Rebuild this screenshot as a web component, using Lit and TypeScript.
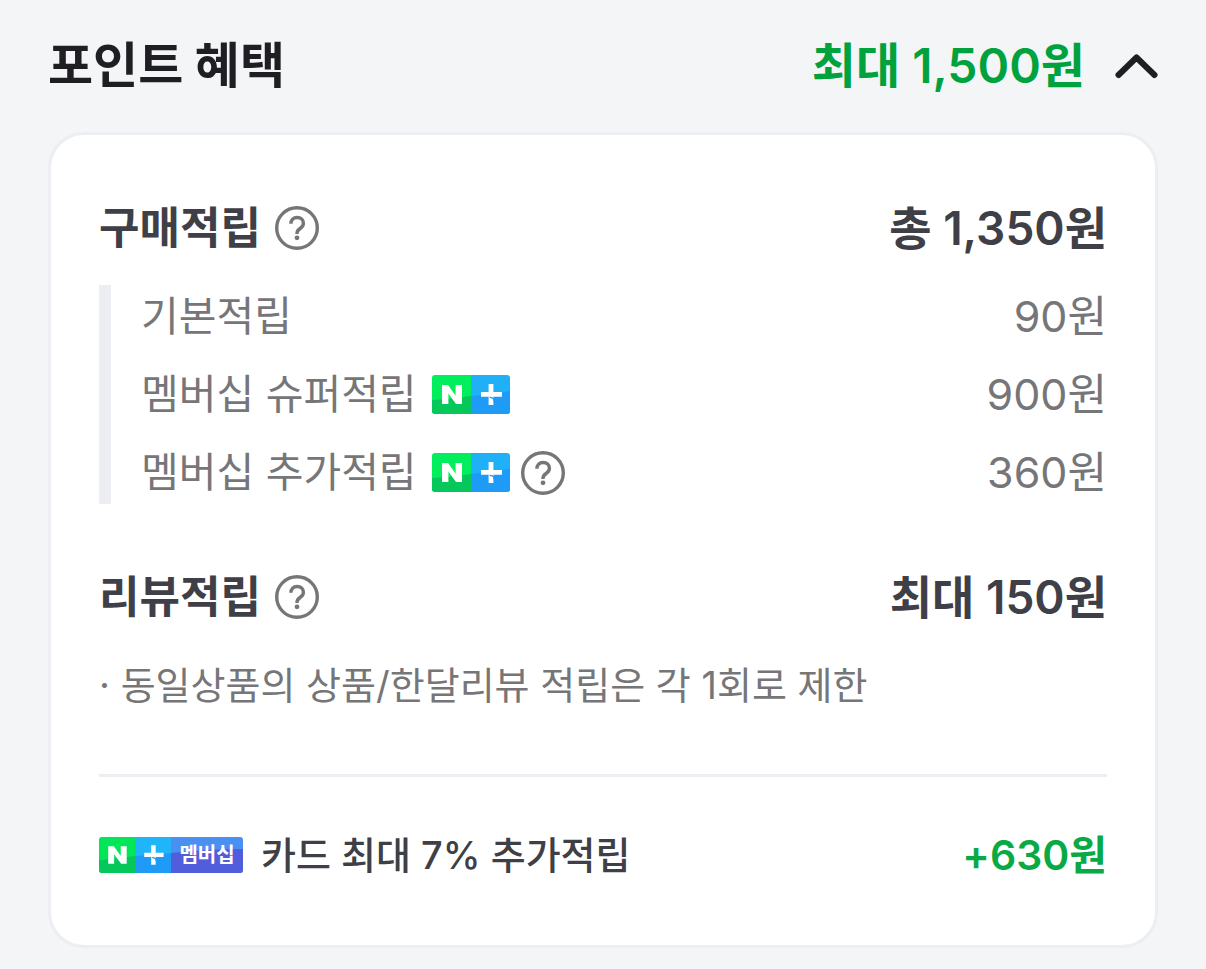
import { LitElement, html, css, svg, nothing } from "lit";
import { customElement, state, property } from "lit/decorators.js";

const fontStack = css`Inter, "Noto Sans CJK KR", sans-serif`;

const letterN = svg`<path fill="#fff" d="M10 10h6l7.6 10.4V10H30v19h-6l-7.6-10.4V29H10z"/>`;
const plusMark = svg`<path fill="#fff" d="M56.6 9h4.8v8H70v4.8h-8.6V30h-4.8v-8.2H49V17h7.6z"/>`;
const plusNotch = svg`<path fill="none" stroke="#1e9af7" stroke-width="1.2" d="M57.6 22.4c2.4 0 4.4 1.2 4.4 3.8"/>`;

@customElement("help-button")
export class HelpButton extends LitElement {
  static styles = css`
    :host { display: inline-flex; }
    .help { display: flex; padding: 0; border: 0; background: none; color: #767678; cursor: pointer; }
    .icon { width: 44px; height: 44px; }
  `;
  @property() label = "";
  render() {
    return html`<button class="help" type="button" aria-label=${this.label}>
      <svg class="icon" viewBox="0 0 44 44" fill="none" stroke="currentColor" aria-hidden="true">
        <circle cx="22" cy="22" r="20.3" stroke-width="3.4"/>
        <path stroke-width="3.4" d="M15.9 17.8c0-3.8 2.5-6.3 6.2-6.3s6.3 2.3 6.3 5.7c0 2.4-1.2 3.9-3.3 5.3-2.1 1.4-3.1 2.5-3.1 4.8v.8"/>
        <circle cx="22" cy="31.8" r="2.4" fill="currentColor" stroke="none"/>
      </svg>
    </button>`;
  }
}

@customElement("plus-badge")
export class PlusBadge extends LitElement {
  static styles = css`
    :host { display: inline-flex; }
    .badge { width: 78px; height: 39px; border-radius: 3px; }
  `;
  render() {
    return html`<svg class="badge" viewBox="0 0 78 39" role="img" aria-label="N+">
      <path fill="#03ee5c" d="M0 0h39v39H0z"/>
      <path fill="#05c75a" d="M0 25q20-1 39-4v18H0z"/>
      <path fill="#1fb0f8" d="M39 0h39v39H39z"/>
      <path fill="#1e9af7" d="M39 21q20-1 39-5v23H39z"/>
      ${letterN}${plusMark}${plusNotch}
    </svg>`;
  }
}

@customElement("membership-badge")
export class MembershipBadge extends LitElement {
  static styles = css`
    :host { display: inline-flex; }
    .badge { width: 144px; height: 36px; border-radius: 3px; }
    .name { font: 700 20px ${fontStack}; fill: #fff; }
  `;
  render() {
    return html`<svg class="badge" viewBox="0 0 144 36" role="img" aria-label="N+ 멤버십">
      <path fill="#04e65a" d="M0 0h36v36H0z"/>
      <path fill="#05c75a" d="M0 23q18-1 36-4v17H0z"/>
      <path fill="#20b5f8" d="M36 0h36v36H36z"/>
      <path fill="#1e9af7" d="M36 19q18-1 36-3v20H36z"/>
      <path fill="#4990f1" d="M72 0h72v36H72z"/>
      <path fill="#505edb" d="M72 16q36-4 72-4v24H72z"/>
      <g transform="scale(.923)">${letterN}${plusMark}${plusNotch}</g>
      <text class="name" x="108" y="25" text-anchor="middle">멤버십</text>
    </svg>`;
  }
}

interface Saving { name: string; amount: string; badge?: boolean; help?: boolean; }

const savings: Saving[] = [
  { name: "기본적립", amount: "90원" },
  { name: "멤버십 슈퍼적립", amount: "900원", badge: true },
  { name: "멤버십 추가적립", amount: "360원", badge: true, help: true },
];

@customElement("app-root")
export class AppRoot extends LitElement {
  static styles = css`
    :host {
      display: block;
      box-sizing: border-box;
      min-height: 100vh;
      padding: 30px 48px 21px;
      background: #f4f5f7;
      color: #3f3f47;
      font-family: ${fontStack};
    }
    h2, h3, p, ul { margin: 0; padding: 0; font: inherit; }
    .toggle {
      display: flex;
      align-items: center;
      width: 100%;
      padding: 0;
      border: 0;
      background: none;
      color: #1e1e23;
      font: 700 49px/72px ${fontStack};
      cursor: pointer;
    }
    .total { margin-left: auto; color: #00a23e; font-size: 48px; font-weight: 600; }
    .chevron { width: 43px; height: 26px; margin-left: 30px; }
    .card {
      margin-top: 30px;
      padding: 60px 48px;
      border: 3px solid #eceef2;
      border-radius: 36px;
      background: #fff;
    }
    .row { display: flex; align-items: center; justify-content: space-between; }
    .label { display: flex; align-items: center; }
    .section { font-size: 44px; font-weight: 600; line-height: 66px; }
    .section .label { gap: 14px; }
    .section .amount { font-size: 46px; }
    .list {
      display: grid;
      gap: 15px;
      margin: 24px 0 60px;
      padding-left: 30px;
      border-left: 12px solid #eceef2;
      list-style: none;
      color: #767678;
      font-size: 41px;
      line-height: 63px;
    }
    .list .amount { font-size: 43px; }
    .list plus-badge { margin-left: 15px; }
    .list help-button { margin-left: 11px; }
    .note { margin-top: 28px; color: #767678; font-size: 38px; line-height: 54px; }
    .card-row {
      margin-top: 62px;
      padding-top: 48px;
      border-top: 3px solid #eceef2;
      font-size: 38px;
      font-weight: 500;
      line-height: 60px;
    }
    .card-row .label { gap: 18px; }
    .card-row .amount { color: #09aa45; font-size: 41px; font-weight: 600; }
  `;

  @state() private open = true;

  render() {
    return html`
      <h2>
        <button class="toggle" type="button" aria-expanded=${this.open} @click=${() => (this.open = !this.open)}>
          <span>포인트 혜택</span>
          <span class="total">최대 1,500원</span>
          <svg class="chevron" viewBox="0 0 43 26" fill="none" stroke="currentColor" stroke-width="6" stroke-linecap="round" stroke-linejoin="round" aria-hidden="true">
            <path d=${this.open ? "M3.5 22 21.5 4.5 39.5 22" : "M3.5 4.5 21.5 22 39.5 4.5"}/>
          </svg>
        </button>
      </h2>
      ${this.open ? this.renderCard() : nothing}
    `;
  }

  private renderCard() {
    return html`<section class="card">
      <div class="row section">
        <div class="label"><h3>구매적립</h3><help-button label="구매적립 안내"></help-button></div>
        <span class="amount">총 1,350원</span>
      </div>
      <ul class="list">
        ${savings.map((s) => html`<li class="row">
          <div class="label">
            <span>${s.name}</span>
            ${s.badge ? html`<plus-badge></plus-badge>` : nothing}
            ${s.help ? html`<help-button label="${s.name} 안내"></help-button>` : nothing}
          </div>
          <span class="amount">${s.amount}</span>
        </li>`)}
      </ul>
      <div class="row section">
        <div class="label"><h3>리뷰적립</h3><help-button label="리뷰적립 안내"></help-button></div>
        <span class="amount">최대 150원</span>
      </div>
      <p class="note">· 동일상품의 상품/한달리뷰 적립은 각 1회로 제한</p>
      <div class="row card-row">
        <div class="label"><membership-badge></membership-badge><span>카드 최대 7% 추가적립</span></div>
        <span class="amount">+630원</span>
      </div>
    </section>`;
  }
}
